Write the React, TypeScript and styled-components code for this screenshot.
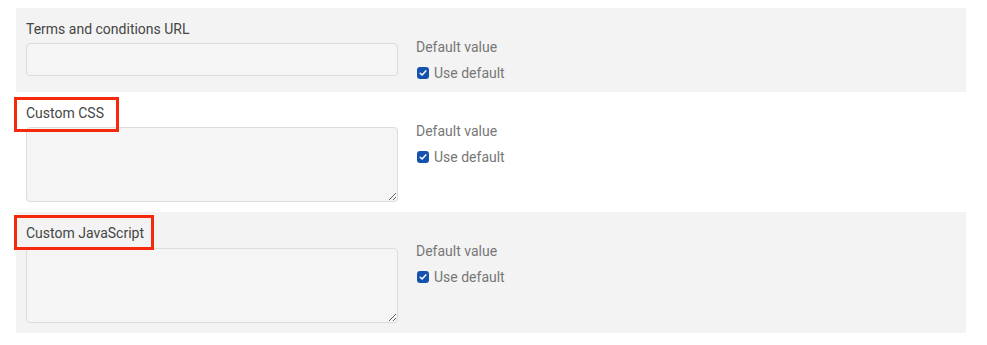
import React from "react";
import styled, { createGlobalStyle } from "styled-components";

const Global = createGlobalStyle`
  html, body { margin: 0; padding: 0; background: #ffffff; }
  body { font-family: Roboto, "Noto Sans", Arial, sans-serif; }
  * { box-sizing: border-box; }
`;

const Page = styled.div`
  padding: 8px 21px 0 16px;
  display: flex;
  flex-direction: column;
`;

const Row = styled.div<{ $shaded: boolean; $bottom: number }>`
  display: flex;
  gap: 18px;
  padding: 13px 10px ${(p) => p.$bottom}px 10px;
  background: ${(p) => (p.$shaded ? "#f3f3f3" : "#ffffff")};
`;

const Left = styled.div<{ $gap: number }>`
  width: 372px;
  display: flex;
  flex-direction: column;
  gap: ${(p) => p.$gap}px;
`;

const Label = styled.label`
  position: relative;
  align-self: flex-start;
  font-size: 14px;
  line-height: 16px;
  color: #454545;
`;

const Highlight = styled.span<{ $top: number; $right: number; $bottom: number }>`
  position: absolute;
  left: -12px;
  right: -${(p) => p.$right}px;
  top: -${(p) => p.$top}px;
  bottom: -${(p) => p.$bottom}px;
  border: 3px solid #f52a0c;
  pointer-events: none;
`;

const TextInput = styled.input`
  display: block;
  width: 372px;
  height: 33px;
  margin: 0;
  border: 1px solid #dcdcdc;
  border-radius: 4px;
  background: #f5f5f5;
  font: inherit;
  outline: none;
`;

const TextArea = styled.textarea`
  display: block;
  width: 372px;
  height: 75px;
  margin: 0;
  border: 1px solid #dcdcdc;
  border-radius: 4px;
  background: #f5f5f5;
  font: inherit;
  outline: none;
  resize: vertical;
`;

const Right = styled.div`
  padding-top: 18px;
  display: flex;
  flex-direction: column;
  gap: 10px;
`;

const Hint = styled.div`
  font-size: 14px;
  line-height: 16px;
  color: #777777;
`;

const CheckRow = styled.label`
  display: flex;
  align-items: center;
  gap: 5px;
  font-size: 14px;
  line-height: 16px;
  color: #777777;
  padding-left: 1px;
`;

const Box = styled.span`
  width: 12px;
  height: 12px;
  border-radius: 3px;
  background: #1452ad;
  display: flex;
  align-items: center;
  justify-content: center;
`;

type Mark = { top: number; right: number; bottom: number };
type Field = { label: string; kind: "input" | "area"; gap: number; bottom: number; mark?: Mark };

const fields: Field[] = [
  { label: "Terms and conditions URL", kind: "input", gap: 6, bottom: 11 },
  { label: "Custom CSS", kind: "area", gap: 6, bottom: 10, mark: { top: 8, right: 15, bottom: 11 } },
  { label: "Custom JavaScript", kind: "area", gap: 7, bottom: 10, mark: { top: 10, right: 10, bottom: 9 } },
];

export default function App() {
  return (
    <>
      <Global />
      <Page>
        {fields.map((f, i) => (
          <Row key={f.label} $shaded={i % 2 === 0} $bottom={f.bottom}>
            <Left $gap={f.gap}>
              <Label>
                {f.label}
                {f.mark && <Highlight $top={f.mark.top} $right={f.mark.right} $bottom={f.mark.bottom} />}
              </Label>
              {f.kind === "input" ? <TextInput type="text" /> : <TextArea />}
            </Left>
            <Right>
              <Hint>Default value</Hint>
              <CheckRow>
                <Box>
                  <svg width="8" height="8" viewBox="0 0 8 8">
                    <path d="M1.2 4.2 L3.1 6 L6.8 1.9" fill="none" stroke="#ffffff" strokeWidth="1.5" strokeLinecap="round" strokeLinejoin="round" />
                  </svg>
                </Box>
                Use default
              </CheckRow>
            </Right>
          </Row>
        ))}
      </Page>
    </>
  );
}
